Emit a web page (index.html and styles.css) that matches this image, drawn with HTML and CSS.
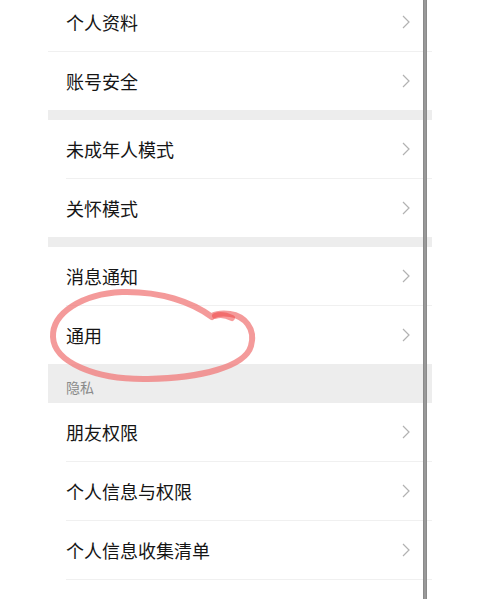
FILE: index.html
```html
<!DOCTYPE html>
<html lang="zh">
<head>
<meta charset="utf-8">
<link rel="stylesheet" href="styles.css">
</head>
<body>
<div class="panel">
  <div class="group">
    <div class="row row-full"><span class="label">个人资料</span><svg class="chev" viewBox="0 0 8 14"><polyline points="1,1 7,7 1,13"/></svg></div>
    <div class="row last"><span class="label">账号安全</span><svg class="chev" viewBox="0 0 8 14"><polyline points="1,1 7,7 1,13"/></svg></div>
  </div>
  <div class="band"></div>
  <div class="group">
    <div class="row"><span class="label">未成年人模式</span><svg class="chev" viewBox="0 0 8 14"><polyline points="1,1 7,7 1,13"/></svg></div>
    <div class="row last"><span class="label">关怀模式</span><svg class="chev" viewBox="0 0 8 14"><polyline points="1,1 7,7 1,13"/></svg></div>
  </div>
  <div class="band"></div>
  <div class="group">
    <div class="row"><span class="label">消息通知</span><svg class="chev" viewBox="0 0 8 14"><polyline points="1,1 7,7 1,13"/></svg></div>
    <div class="row last"><span class="label">通用</span><svg class="chev" viewBox="0 0 8 14"><polyline points="1,1 7,7 1,13"/></svg></div>
  </div>
  <div class="section-head">隐私</div>
  <div class="group">
    <div class="row"><span class="label">朋友权限</span><svg class="chev" viewBox="0 0 8 14"><polyline points="1,1 7,7 1,13"/></svg></div>
    <div class="row"><span class="label">个人信息与权限</span><svg class="chev" viewBox="0 0 8 14"><polyline points="1,1 7,7 1,13"/></svg></div>
    <div class="row"><span class="label">个人信息收集清单</span><svg class="chev" viewBox="0 0 8 14"><polyline points="1,1 7,7 1,13"/></svg></div>
  </div>
</div>
<div class="scrollbar"></div>
<svg class="annot" width="480" height="599" viewBox="0 0 480 599">
  <path d="M 212 317 C 192 302, 160 291, 122 292 C 82 294, 52 313, 53 337 C 54 362, 95 380, 148 379 C 200 378, 245 367, 251 346 C 256 328, 244 316, 230 314 C 222 313, 216 314, 212 316"/>
  <path class="dot" d="M 215 316 C 220 314, 226 315, 232 318"/>
</svg>
</body>
</html>
```
FILE: styles.css
```css
html, body {
  margin: 0;
  padding: 0;
  background: #ffffff;
  height: 599px;
  overflow: hidden;
}
body {
  position: relative;
  font-family: "Noto Sans CJK SC", "Noto Sans", sans-serif;
}
.panel {
  margin-left: 48px;
  width: 384px;
  margin-top: -7px;
  display: flex;
  flex-direction: column;
}
.group {
  display: flex;
  flex-direction: column;
}
.row {
  position: relative;
  height: 58px;
  margin-bottom: 1px;
  display: flex;
  align-items: center;
  justify-content: space-between;
  padding: 0 22px 0 18px;
}
.row::after {
  content: "";
  position: absolute;
  left: 18px;
  right: 0;
  bottom: -1px;
  height: 1px;
  background: #f0f0f0;
}
.row.row-full::after { left: 0; }
.row.last { margin-bottom: 0; }
.row.last::after { display: none; }
.label {
  font-size: 18px;
  color: #151515;
  line-height: 24px;
}
.chev {
  width: 8px;
  height: 14px;
  fill: none;
  stroke: #b2b2b2;
  stroke-width: 1.2;
}
.band {
  height: 10px;
  background: #ededed;
}
.section-head {
  height: 39px;
  background: #ededed;
  display: flex;
  align-items: flex-end;
  padding: 0 0 6px 18px;
  box-sizing: border-box;
  font-size: 14px;
  line-height: 20px;
  color: #8a8a8a;
}
.scrollbar {
  position: absolute;
  left: 423px;
  top: 0;
  width: 4px;
  height: 599px;
  background: #999999;
  border-left: 1px solid #8a8a8a;
  border-right: 1px solid #8a8a8a;
  box-sizing: border-box;
}
.annot {
  position: absolute;
  left: 0;
  top: 0;
  pointer-events: none;
}
.annot path {
  fill: none;
  stroke: #f07878;
  stroke-opacity: 0.75;
  stroke-width: 6;
  stroke-linecap: round;
  filter: blur(0.6px);
}
.annot path.dot {
  stroke: #f04848;
  stroke-opacity: 0.55;
  stroke-width: 6;
}
```
